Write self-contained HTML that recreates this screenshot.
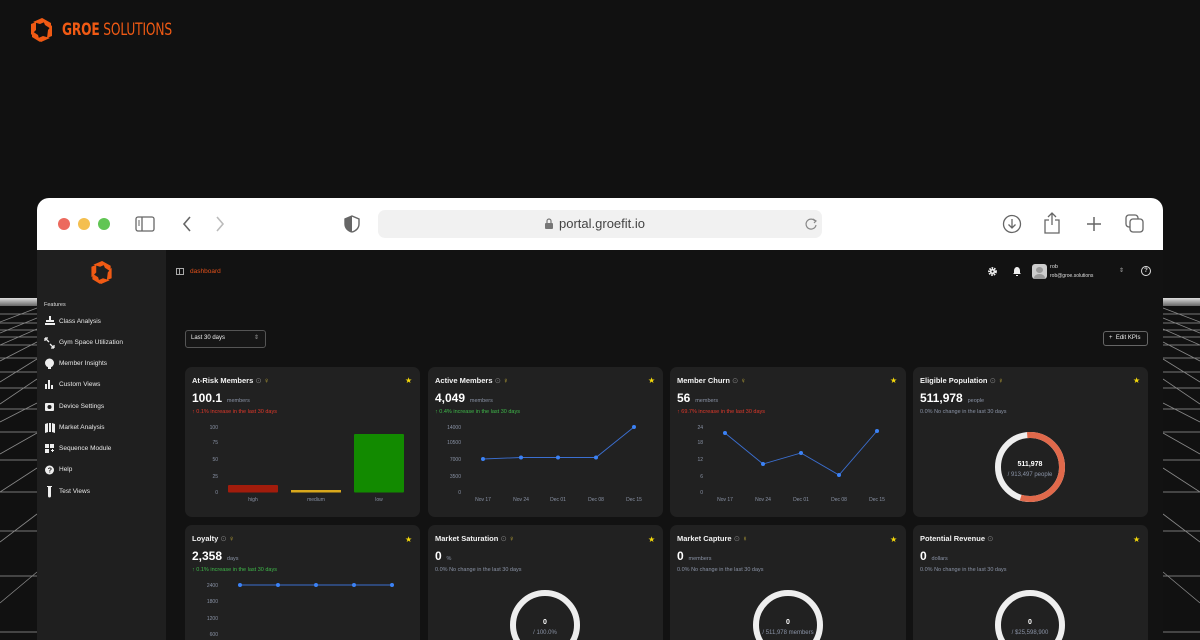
<!DOCTYPE html>
<html><head><meta charset="utf-8"><style>
*{margin:0;padding:0;box-sizing:border-box}
html{width:1200px;height:640px;overflow:hidden}
body{width:1200px;height:640px;background:#111;position:relative;overflow:hidden;font-family:"Liberation Sans",sans-serif;color:#fff}
.a{position:absolute;white-space:nowrap}
.card{position:absolute;background:#212121;border-radius:7px}
.t{font-size:7.5px;font-weight:bold;color:#f2f2f2}
.v{font-size:12px;font-weight:bold;color:#fff}
.u{font-size:5.5px;color:#8a93a6}
.c{font-size:5.5px}
.ax{font-size:5px;color:#8a93a6}
.nav{font-size:6.5px;color:#e8e8e8}
</style></head><body>

<svg class="a" style="left:0;top:0" width="1200" height="640">
<defs><linearGradient id="gb" x1="0" y1="0" x2="0" y2="1"><stop offset="0" stop-color="#ddd"/><stop offset="1" stop-color="#666"/></linearGradient></defs>
<g stroke="#777" stroke-width="1">
<rect x="0" y="298" width="37" height="8" fill="url(#gb)" stroke="none"/>
<rect x="1163" y="298" width="37" height="8" fill="url(#gb)" stroke="none"/>
<line x1="0" y1="314" x2="37" y2="314"/><line x1="0" y1="323" x2="37" y2="323"/><line x1="0" y1="330" x2="37" y2="330"/><line x1="0" y1="337" x2="37" y2="337"/><line x1="0" y1="345" x2="37" y2="345"/><line x1="0" y1="358" x2="37" y2="358"/><line x1="0" y1="372" x2="37" y2="372"/><line x1="0" y1="388" x2="37" y2="388"/><line x1="0" y1="409" x2="37" y2="409"/><line x1="0" y1="432" x2="37" y2="432"/><line x1="0" y1="460" x2="37" y2="460"/><line x1="0" y1="492" x2="37" y2="492"/><line x1="0" y1="531" x2="37" y2="531"/><line x1="0" y1="576" x2="37" y2="576"/><line x1="0" y1="632" x2="37" y2="632"/>
<line x1="1163" y1="314" x2="1200" y2="314"/><line x1="1163" y1="323" x2="1200" y2="323"/><line x1="1163" y1="330" x2="1200" y2="330"/><line x1="1163" y1="337" x2="1200" y2="337"/><line x1="1163" y1="345" x2="1200" y2="345"/><line x1="1163" y1="358" x2="1200" y2="358"/><line x1="1163" y1="372" x2="1200" y2="372"/><line x1="1163" y1="388" x2="1200" y2="388"/><line x1="1163" y1="409" x2="1200" y2="409"/><line x1="1163" y1="432" x2="1200" y2="432"/><line x1="1163" y1="460" x2="1200" y2="460"/><line x1="1163" y1="492" x2="1200" y2="492"/><line x1="1163" y1="531" x2="1200" y2="531"/><line x1="1163" y1="576" x2="1200" y2="576"/><line x1="1163" y1="632" x2="1200" y2="632"/>
<g stroke="#888" stroke-width="0.8">
<line x1="1163" y1="308" x2="1200" y2="322"/><line x1="1163" y1="318" x2="1200" y2="333"/><line x1="1163" y1="329" x2="1200" y2="345"/><line x1="1163" y1="342" x2="1200" y2="361"/><line x1="1163" y1="359" x2="1200" y2="382"/><line x1="1163" y1="379" x2="1200" y2="404"/><line x1="1163" y1="403" x2="1200" y2="422"/><line x1="1163" y1="433" x2="1200" y2="454"/><line x1="1163" y1="468" x2="1200" y2="492"/><line x1="1163" y1="514" x2="1200" y2="542"/><line x1="1163" y1="572" x2="1200" y2="603"/>
<line x1="0" y1="322" x2="37" y2="308"/><line x1="0" y1="333" x2="37" y2="318"/><line x1="0" y1="345" x2="37" y2="329"/><line x1="0" y1="361" x2="37" y2="342"/><line x1="0" y1="382" x2="37" y2="359"/><line x1="0" y1="404" x2="37" y2="379"/><line x1="0" y1="422" x2="37" y2="403"/><line x1="0" y1="454" x2="37" y2="433"/><line x1="0" y1="492" x2="37" y2="468"/><line x1="0" y1="542" x2="37" y2="514"/><line x1="0" y1="603" x2="37" y2="572"/>
</g></g></svg>

<svg class="a" style="left:30px;top:17px" width="24" height="26" viewBox="0 0 24 26"><g fill="#f05a14"><path d="M12 1 L21 6 L21 12 L15 8 Z"/><path d="M22 8 L22 19 L17 21 L18 13 Z"/><path d="M20 21 L11 25 L6 22 L13 19 Z"/><path d="M10 25 L2 20 L2 14 L8 18 Z"/><path d="M1 18 L1 7 L6 5 L6 13 Z"/><path d="M3 5 L12 1 L17 4 L10 7 Z"/></g></svg>
<div class="a" style="left:62px;top:20px;font-size:17px;color:#f05a14;font-family:'DejaVu Sans Condensed','Liberation Sans',sans-serif;transform:scaleX(0.8);transform-origin:0 0;letter-spacing:-0.2px"><b>GROE</b> SOLUTIONS</div>

<div class="a" style="left:37px;top:198px;width:1126px;height:442px;background:#121212;border-radius:12px 12px 0 0;overflow:hidden">
 <div class="a" style="left:0;top:0;width:1126px;height:52px;background:#fff"></div>
 <div class="a" style="left:21px;top:20px;width:12px;height:12px;border-radius:50%;background:#ec6a5e"></div>
 <div class="a" style="left:41px;top:20px;width:12px;height:12px;border-radius:50%;background:#f4bf4f"></div>
 <div class="a" style="left:61px;top:20px;width:12px;height:12px;border-radius:50%;background:#61c554"></div>
 <svg class="a" style="left:98px;top:18px" width="20" height="16"><rect x="1" y="1" width="18" height="14" rx="2" fill="none" stroke="#666" stroke-width="1.3"/><line x1="7" y1="1" x2="7" y2="15" stroke="#666" stroke-width="1.3"/><line x1="3" y1="5" x2="5" y2="5" stroke="#666"/><line x1="3" y1="7" x2="5" y2="7" stroke="#666"/><line x1="3" y1="9" x2="5" y2="9" stroke="#666"/></svg>
 <svg class="a" style="left:144px;top:17px" width="12" height="18"><path d="M9 2 L3 9 L9 16" fill="none" stroke="#666" stroke-width="1.6"/></svg>
 <svg class="a" style="left:177px;top:17px" width="12" height="18"><path d="M3 2 L9 9 L3 16" fill="none" stroke="#bbb" stroke-width="1.6"/></svg>
 <svg class="a" style="left:307px;top:17px" width="16" height="18"><path d="M8 1 L15 4 L15 9 C15 13 12 16 8 17 C4 16 1 13 1 9 L1 4 Z" fill="none" stroke="#666" stroke-width="1.4"/><path d="M8 1 L1 4 L1 9 C1 13 4 16 8 17 Z" fill="#666"/></svg>
 <div class="a" style="left:341px;top:12px;width:444px;height:28px;background:#f1f1f1;border-radius:7px"></div>
 <svg class="a" style="left:507px;top:20px" width="10" height="12"><rect x="1" y="5" width="8" height="6" rx="1" fill="#777"/><path d="M3 5 V3 a2 2 0 0 1 4 0 V5" fill="none" stroke="#777" stroke-width="1.2"/></svg>
 <div class="a" style="left:522px;top:18px;font-size:13px;color:#444">portal.groefit.io</div>
 <svg class="a" style="left:767px;top:19px" width="14" height="14"><path d="M11 4 A5 5 0 1 0 12 8" fill="none" stroke="#888" stroke-width="1.2"/><path d="M9 2 L12 4 L10 6" fill="none" stroke="#888" stroke-width="1.2"/></svg>
 <svg class="a" style="left:965px;top:16px" width="20" height="20"><circle cx="10" cy="10" r="8.5" fill="none" stroke="#666" stroke-width="1.3"/><path d="M10 5 V14 M6.5 10.5 L10 14 L13.5 10.5" fill="none" stroke="#666" stroke-width="1.3"/></svg>
 <svg class="a" style="left:1006px;top:13px" width="18" height="24"><path d="M9 2 V14 M5 6 L9 2 L13 6" fill="none" stroke="#666" stroke-width="1.3"/><path d="M6 9 H2 V22 H16 V9 H12" fill="none" stroke="#666" stroke-width="1.3"/></svg>
 <svg class="a" style="left:1049px;top:18px" width="16" height="16"><path d="M8 1 V15 M1 8 H15" stroke="#666" stroke-width="1.5"/></svg>
 <svg class="a" style="left:1088px;top:16px" width="20" height="20"><rect x="1" y="1" width="12" height="12" rx="3" fill="none" stroke="#666" stroke-width="1.3"/><rect x="5" y="5" width="13" height="13" rx="3" fill="#fff" stroke="#666" stroke-width="1.3"/></svg>
 <div class="a" style="left:0;top:52px;width:129px;height:390px;background:#1f1f1f"></div>
</div>

<svg class="a" style="left:90px;top:260px" width="24" height="25" viewBox="0 0 24 26"><g fill="#f05a14"><path d="M12 1 L21 6 L21 12 L15 8 Z"/><path d="M22 8 L22 19 L17 21 L18 13 Z"/><path d="M20 21 L11 25 L6 22 L13 19 Z"/><path d="M10 25 L2 20 L2 14 L8 18 Z"/><path d="M1 18 L1 7 L6 5 L6 13 Z"/><path d="M3 5 L12 1 L17 4 L10 7 Z"/></g></svg>
<div class="a" style="left:44px;top:302px;font-size:5.5px;color:#ddd">Features</div>
<div class="a nav" style="left:59px;top:318px">Class Analysis</div>
<div class="a nav" style="left:59px;top:339px">Gym Space Utilization</div>
<div class="a nav" style="left:59px;top:360px">Member Insights</div>
<div class="a nav" style="left:59px;top:381px">Custom Views</div>
<div class="a nav" style="left:59px;top:403px">Device Settings</div>
<div class="a nav" style="left:59px;top:424px">Market Analysis</div>
<div class="a nav" style="left:59px;top:445px">Sequence Module</div>
<div class="a nav" style="left:59px;top:466px">Help</div>
<div class="a nav" style="left:59px;top:488px">Test Views</div>
<svg class="a" style="left:44px;top:315px" width="12" height="185" fill="#eee">
<path d="M5 1 h2 v4 h3 v2 h-8 v-2 h3z M1 8 h10 v2 h-10z"/>
<path d="M1 23 l4 4 M1 23 h3 M1 23 v3 M10 33 l-4 -4 M10 33 h-3 M10 33 v-3" stroke="#eee" stroke-width="1.3" fill="none"/>
<circle cx="5.5" cy="48" r="4.5"/><rect x="4" y="52" width="3" height="2"/>
<rect x="1" y="69" width="2" height="5"/><rect x="4" y="65" width="2" height="9"/><rect x="7" y="70" width="2" height="4"/>
<rect x="1" y="88" width="9" height="8" rx="1"/><circle cx="5.5" cy="92" r="2" fill="#1f1f1f"/>
<path d="M1 109 l3 -1 v9 l-3 1z M5 108 h2 v9 h-2z M8 108 l3 1 v9 l-3 -1z"/>
<rect x="1" y="129" width="4" height="4"/><rect x="6" y="129" width="4" height="4"/><rect x="1" y="134" width="4" height="4"/><path d="M7 135 h3 v1 h-3z M8 134 h1 v3 h-1z"/>
<circle cx="5.5" cy="155" r="4.5"/><text x="3.7" y="157.5" font-size="7" fill="#1f1f1f" font-family="Liberation Sans" font-weight="bold">?</text>
<path d="M3 171 h5 v1 h-1 v9 a1.5 1.5 0 0 1 -3 0 v-9 h-1z"/>
</svg>

<svg class="a" style="left:176px;top:268px" width="8" height="7"><rect x="0.5" y="0.5" width="7" height="6" fill="none" stroke="#aaa"/><line x1="3.5" y1="0.5" x2="3.5" y2="6.5" stroke="#aaa"/></svg>
<div class="a" style="left:190px;top:268px;font-size:6.5px;color:#e0501a">dashboard</div>
<svg class="a" style="left:988px;top:267px" width="9" height="9"><circle cx="4.5" cy="4.5" r="3.4" fill="none" stroke="#eee" stroke-width="2" stroke-dasharray="1.6 0.9"/><circle cx="4.5" cy="4.5" r="2.6" fill="#eee"/><circle cx="4.5" cy="4.5" r="1" fill="#121212"/></svg>
<svg class="a" style="left:1013px;top:266px" width="8" height="10"><path d="M4 1 C6 1 7 3 7 5 V7 L8 8 H0 L1 7 V5 C1 3 2 1 4 1Z M3 9 h2 v1 h-2z" fill="#eee"/></svg>
<div class="a" style="left:1032px;top:264px;width:15px;height:15px;border-radius:3px;background:#ccc;overflow:hidden"><div class="a" style="left:4px;top:3px;width:7px;height:6px;border-radius:50%;background:#999"></div><div class="a" style="left:2px;top:10px;width:11px;height:8px;border-radius:50%;background:#999"></div></div>
<div class="a" style="left:1050px;top:264px;font-size:5.5px;color:#ddd">rob</div>
<div class="a" style="left:1050px;top:273px;font-size:5px;color:#ddd">rob@groe.solutions</div>
<div class="a" style="left:1119px;top:267px;font-size:6px;color:#aaa">⇕</div>
<div class="a" style="left:1141px;top:266px;width:10px;height:10px;border:1.2px solid #ddd;border-radius:50%;font-size:6px;text-align:center;line-height:8px;color:#ddd;font-weight:bold">?</div>

<div class="a" style="left:185px;top:330px;width:81px;height:18px;border:1px solid #555;border-radius:3px;background:#161616"></div>
<div class="a" style="left:191px;top:335px;font-size:6px;color:#eee">Last 30 days</div>
<div class="a" style="left:254px;top:334px;font-size:6px;color:#999">⇕</div>
<div class="a" style="left:1103px;top:331px;width:45px;height:15px;border:1px solid #666;border-radius:3px"></div>
<div class="a" style="left:1109px;top:335px;font-size:6px;color:#eee">+&nbsp; Edit KPIs</div>

<div class="card" style="left:185px;top:367px;width:235px;height:150px"></div>
<div class="card" style="left:428px;top:367px;width:235px;height:150px"></div>
<div class="card" style="left:670px;top:367px;width:236px;height:150px"></div>
<div class="card" style="left:913px;top:367px;width:235px;height:150px"></div>
<div class="card" style="left:185px;top:525px;width:235px;height:115px;border-radius:7px 7px 0 0"></div>
<div class="card" style="left:428px;top:525px;width:235px;height:115px;border-radius:7px 7px 0 0"></div>
<div class="card" style="left:670px;top:525px;width:236px;height:115px;border-radius:7px 7px 0 0"></div>
<div class="card" style="left:913px;top:525px;width:235px;height:115px;border-radius:7px 7px 0 0"></div>

<div class="a t" style="left:192px;top:376px">At-Risk Members <span style="color:#777;font-weight:normal">⊙</span> <span style="color:#c9b13a;font-weight:normal">♀</span></div>
<div class="a v" style="left:192px;top:391px">100.1 <span class="u" style="font-weight:normal">&nbsp;members</span></div>
<div class="a c" style="left:192px;top:409px;color:#e0382a">↑ 0.1% increase in the last 30 days</div>
<div class="a t" style="left:435px;top:376px">Active Members <span style="color:#777;font-weight:normal">⊙</span> <span style="color:#c9b13a;font-weight:normal">♀</span></div>
<div class="a v" style="left:435px;top:391px">4,049 <span class="u" style="font-weight:normal">&nbsp;members</span></div>
<div class="a c" style="left:435px;top:409px;color:#3fb94a">↑ 0.4% increase in the last 30 days</div>
<div class="a t" style="left:677px;top:376px">Member Churn <span style="color:#777;font-weight:normal">⊙</span> <span style="color:#c9b13a;font-weight:normal">♀</span></div>
<div class="a v" style="left:677px;top:391px">56 <span class="u" style="font-weight:normal">&nbsp;members</span></div>
<div class="a c" style="left:677px;top:409px;color:#e0382a">↑ 69.7% increase in the last 30 days</div>
<div class="a t" style="left:920px;top:376px">Eligible Population <span style="color:#777;font-weight:normal">⊙</span> <span style="color:#c9b13a;font-weight:normal">♀</span></div>
<div class="a v" style="left:920px;top:391px">511,978 <span class="u" style="font-weight:normal">&nbsp;people</span></div>
<div class="a c" style="left:920px;top:409px;color:#8a93a6">0.0% No change in the last 30 days</div>
<div class="a t" style="left:192px;top:534px">Loyalty <span style="color:#777;font-weight:normal">⊙</span> <span style="color:#c9b13a;font-weight:normal">♀</span></div>
<div class="a v" style="left:192px;top:549px">2,358 <span class="u" style="font-weight:normal">&nbsp;days</span></div>
<div class="a c" style="left:192px;top:567px;color:#3fb94a">↑ 0.1% increase in the last 30 days</div>
<div class="a t" style="left:435px;top:534px">Market Saturation <span style="color:#777;font-weight:normal">⊙</span> <span style="color:#c9b13a;font-weight:normal">♀</span></div>
<div class="a v" style="left:435px;top:549px">0 <span class="u" style="font-weight:normal">&nbsp;%</span></div>
<div class="a c" style="left:435px;top:567px;color:#8a93a6">0.0% No change in the last 30 days</div>
<div class="a t" style="left:677px;top:534px">Market Capture <span style="color:#777;font-weight:normal">⊙</span> <span style="color:#c9b13a;font-weight:normal">♀</span></div>
<div class="a v" style="left:677px;top:549px">0 <span class="u" style="font-weight:normal">&nbsp;members</span></div>
<div class="a c" style="left:677px;top:567px;color:#8a93a6">0.0% No change in the last 30 days</div>
<div class="a t" style="left:920px;top:534px">Potential Revenue <span style="color:#777;font-weight:normal">⊙</span></div>
<div class="a v" style="left:920px;top:549px">0 <span class="u" style="font-weight:normal">&nbsp;dollars</span></div>
<div class="a c" style="left:920px;top:567px;color:#8a93a6">0.0% No change in the last 30 days</div>

<div class="a" style="left:405px;top:376px;font-size:8px;color:#f5d90a">★</div>
<div class="a" style="left:648px;top:376px;font-size:8px;color:#f5d90a">★</div>
<div class="a" style="left:890px;top:376px;font-size:8px;color:#f5d90a">★</div>
<div class="a" style="left:1133px;top:376px;font-size:8px;color:#f5d90a">★</div>
<div class="a" style="left:405px;top:535px;font-size:8px;color:#f5d90a">★</div>
<div class="a" style="left:648px;top:535px;font-size:8px;color:#f5d90a">★</div>
<div class="a" style="left:890px;top:535px;font-size:8px;color:#f5d90a">★</div>
<div class="a" style="left:1133px;top:535px;font-size:8px;color:#f5d90a">★</div>

<svg class="a" style="left:0;top:0" width="1200" height="640" font-family="Liberation Sans" font-size="5" fill="#8a93a6">
<g text-anchor="end">
<text x="218" y="429">100</text><text x="218" y="444">75</text><text x="218" y="461">50</text><text x="218" y="478">25</text><text x="218" y="494">0</text>
<text x="461" y="429">14000</text><text x="461" y="444">10500</text><text x="461" y="461">7000</text><text x="461" y="478">3500</text><text x="461" y="494">0</text>
<text x="703" y="429">24</text><text x="703" y="444">18</text><text x="703" y="461">12</text><text x="703" y="478">6</text><text x="703" y="494">0</text>
<text x="218" y="587">2400</text><text x="218" y="603">1800</text><text x="218" y="620">1200</text><text x="218" y="636">600</text>
</g>
<rect x="228" y="485" width="50" height="7.5" fill="#a21c0c" rx="1"/>
<rect x="291" y="490" width="50" height="2.5" fill="#d9a81c"/>
<rect x="354" y="434" width="50" height="58.5" fill="#128a00" rx="1"/>
<g text-anchor="middle"><text x="253" y="501">high</text><text x="316" y="501">medium</text><text x="379" y="501">low</text>
<text x="483" y="501">Nov 17</text><text x="521" y="501">Nov 24</text><text x="558" y="501">Dec 01</text><text x="596" y="501">Dec 08</text><text x="634" y="501">Dec 15</text>
<text x="725" y="501">Nov 17</text><text x="763" y="501">Nov 24</text><text x="801" y="501">Dec 01</text><text x="839" y="501">Dec 08</text><text x="877" y="501">Dec 15</text></g>
<g stroke="#3b6fd1" stroke-width="0.9" fill="none">
<polyline points="483,459 521,457.5 558,457.5 596,457.5 634,427"/>
<polyline points="725,433 763,464 801,453 839,475 877,431"/>
<polyline points="240,585 278,585 316,585 354,585 392,585"/></g>
<g fill="#3b82f6">
<circle cx="483" cy="459" r="2"/><circle cx="521" cy="457.5" r="2"/><circle cx="558" cy="457.5" r="2"/><circle cx="596" cy="457.5" r="2"/><circle cx="634" cy="427" r="2"/>
<circle cx="725" cy="433" r="2"/><circle cx="763" cy="464" r="2"/><circle cx="801" cy="453" r="2"/><circle cx="839" cy="475" r="2"/><circle cx="877" cy="431" r="2"/>
<circle cx="240" cy="585" r="2"/><circle cx="278" cy="585" r="2"/><circle cx="316" cy="585" r="2"/><circle cx="354" cy="585" r="2"/><circle cx="392" cy="585" r="2"/></g>
<circle cx="1030" cy="467" r="32" fill="none" stroke="#eeeeee" stroke-width="6"/>
<circle cx="1030" cy="467" r="32" fill="none" stroke="#e0694b" stroke-width="6" stroke-dasharray="112.6 201" transform="rotate(-95 1030 467)"/>
<text x="1030" y="466" text-anchor="middle" font-size="7" font-weight="bold" fill="#fff">511,978</text>
<text x="1030" y="476" text-anchor="middle" font-size="6">/ 913,497 people</text>
<circle cx="545" cy="625" r="32" fill="none" stroke="#eeeeee" stroke-width="6"/>
<text x="545" y="624" text-anchor="middle" font-size="7" font-weight="bold" fill="#fff">0</text>
<text x="545" y="634" text-anchor="middle" font-size="6">/ 100.0%</text>
<circle cx="788" cy="625" r="32" fill="none" stroke="#eeeeee" stroke-width="6"/>
<text x="788" y="624" text-anchor="middle" font-size="7" font-weight="bold" fill="#fff">0</text>
<text x="788" y="634" text-anchor="middle" font-size="6">/ 511,978 members</text>
<circle cx="1030" cy="625" r="32" fill="none" stroke="#eeeeee" stroke-width="6"/>
<text x="1030" y="624" text-anchor="middle" font-size="7" font-weight="bold" fill="#fff">0</text>
<text x="1030" y="634" text-anchor="middle" font-size="6">/ $25,598,900</text>
</svg>
</body></html>
